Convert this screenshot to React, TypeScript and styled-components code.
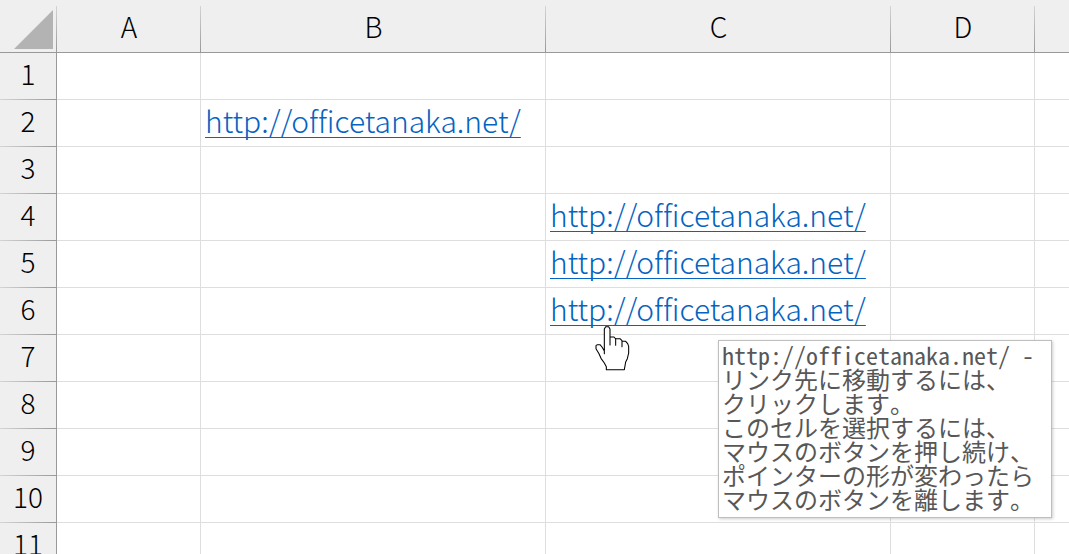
import React from "react";
import styled, { createGlobalStyle } from "styled-components";

const GlobalStyle = createGlobalStyle`
  body {
    margin: 0;
    background: #ffffff;
  }
`;

const Viewport = styled.main`
  height: 100vh;
  overflow: hidden;
  background: #ffffff;
  font-family: "Noto Sans CJK JP", sans-serif;
  font-weight: 300;
  font-size: 28px;
  line-height: 32px;
  font-variant-ligatures: none;
`;

const Sheet = styled.table`
  width: 100%;
  table-layout: fixed;
  border-collapse: separate;
  border-spacing: 0;
`;

const Column = styled.col<{ $width?: number }>`
  width: ${({ $width }) => ($width ? `${$width}px` : "auto")};
`;

const Corner = styled.td`
  box-sizing: border-box;
  height: 53px;
  padding: 0;
  border-bottom: 1px solid #999999;
  background:
    linear-gradient(#d4d4d4, #999999) right 0 bottom 0 / 1px 46px no-repeat,
    #efefef;
`;

const SelectAll = styled.button`
  display: block;
  width: 39px;
  height: 39px;
  margin: 10px 4px 3px auto;
  padding: 0;
  border: 0;
  background: #b3b3b3;
  clip-path: polygon(100% 0, 100% 100%, 0 100%);
`;

const ColumnHeader = styled.th`
  box-sizing: border-box;
  height: 53px;
  padding: 0;
  border-bottom: 1px solid #999999;
  background:
    linear-gradient(#d4d4d4, #999999) right 0 bottom 0 / 1px 46px no-repeat,
    #efefef;
  color: #000000;
  font-weight: 300;
  text-align: center;

  &:last-child {
    background: #efefef;
  }
`;

const RowHeader = styled.th`
  box-sizing: border-box;
  height: 47px;
  padding: 0 0 7px;
  border-right: 1px solid #999999;
  background:
    linear-gradient(90deg, #d4d4d4, #999999) left 0 bottom 0 / 100% 1px no-repeat,
    #efefef;
  color: #000000;
  font-weight: 300;
  text-align: center;
`;

const Cell = styled.td`
  position: relative;
  box-sizing: border-box;
  height: 47px;
  padding: 0 4px 6px;
  border-right: 1px solid #dedede;
  border-bottom: 1px solid #dedede;
  white-space: nowrap;

  &:last-child {
    border-right: 0;
  }
`;

const CellLink = styled.a`
  color: #0563c1;
  font-size: 30px;
  text-decoration: underline;
  text-decoration-thickness: 1px;
  text-decoration-skip-ink: none;
  text-underline-offset: 4px;
`;

const Pointer = styled.svg`
  position: absolute;
  z-index: 2;
  left: 49px;
  top: 38px;
  width: 35px;
  height: 45px;
`;

const ScreenTip = styled.div`
  position: absolute;
  z-index: 1;
  left: 172px;
  top: 52px;
  box-sizing: border-box;
  width: 334px;
  padding: 2px 3px 6px;
  border: 1px solid #bebebe;
  background: #ffffff;
  box-shadow: 1px 1px 3px rgba(0, 0, 0, 0.2);
  color: #575757;
  font-family: "Noto Sans Mono CJK JP", "DejaVu Sans Mono", "Noto Sans CJK JP", monospace;
  font-weight: 400;
  font-size: 24px;
  line-height: 24px;
`;

const TipLine = styled.div`
  white-space: nowrap;
`;

const address = "http://officetanaka.net/";
const columns = ["A", "B", "C", "D", ""];
const rows = [1, 2, 3, 4, 5, 6, 7, 8, 9, 10, 11];
const linkedCells = ["B2", "C4", "C5", "C6"];
const hoveredCell = "C6";
const tipLines = [
  `${address} -`,
  "リンク先に移動するには、",
  "クリックします。",
  "このセルを選択するには、",
  "マウスのボタンを押し続け、",
  "ポインターの形が変わったら",
  "マウスのボタンを離します。",
];

function HandPointer() {
  return (
    <Pointer viewBox="46 47 105 135" aria-hidden="true">
      <path
        d="M74 130V56L78 49H87L91 56V104V80H103L108 86V105V85H121L127 91V109V93H138L144 100L147 108V128L143 145L138 155L134 178H80V169L74 158L64 144L58 130L49 115V106L53 103H61L67 110L74 122Z"
        fill="#ffffff"
        stroke="#000000"
        strokeWidth="3.2"
        strokeLinejoin="round"
      />
    </Pointer>
  );
}

export default function App() {
  return (
    <>
      <GlobalStyle />
      <Viewport>
        <Sheet>
          <colgroup>
            <Column $width={57} />
            <Column $width={144} />
            <Column $width={345} />
            <Column $width={345} />
            <Column $width={144} />
            <Column />
          </colgroup>
          <thead>
            <tr>
              <Corner>
                <SelectAll type="button" aria-label="すべて選択" />
              </Corner>
              {columns.map((name) => (
                <ColumnHeader key={name} scope="col">
                  {name}
                </ColumnHeader>
              ))}
            </tr>
          </thead>
          <tbody>
            {rows.map((row) => (
              <tr key={row}>
                <RowHeader scope="row">{row}</RowHeader>
                {columns.map((name) => {
                  const id = `${name}${row}`;
                  return (
                    <Cell key={id}>
                      {linkedCells.includes(id) && <CellLink href={address}>{address}</CellLink>}
                      {id === hoveredCell && (
                        <>
                          <HandPointer />
                          <ScreenTip role="tooltip">
                            {tipLines.map((line) => (
                              <TipLine key={line}>{line}</TipLine>
                            ))}
                          </ScreenTip>
                        </>
                      )}
                    </Cell>
                  );
                })}
              </tr>
            ))}
          </tbody>
        </Sheet>
      </Viewport>
    </>
  );
}
